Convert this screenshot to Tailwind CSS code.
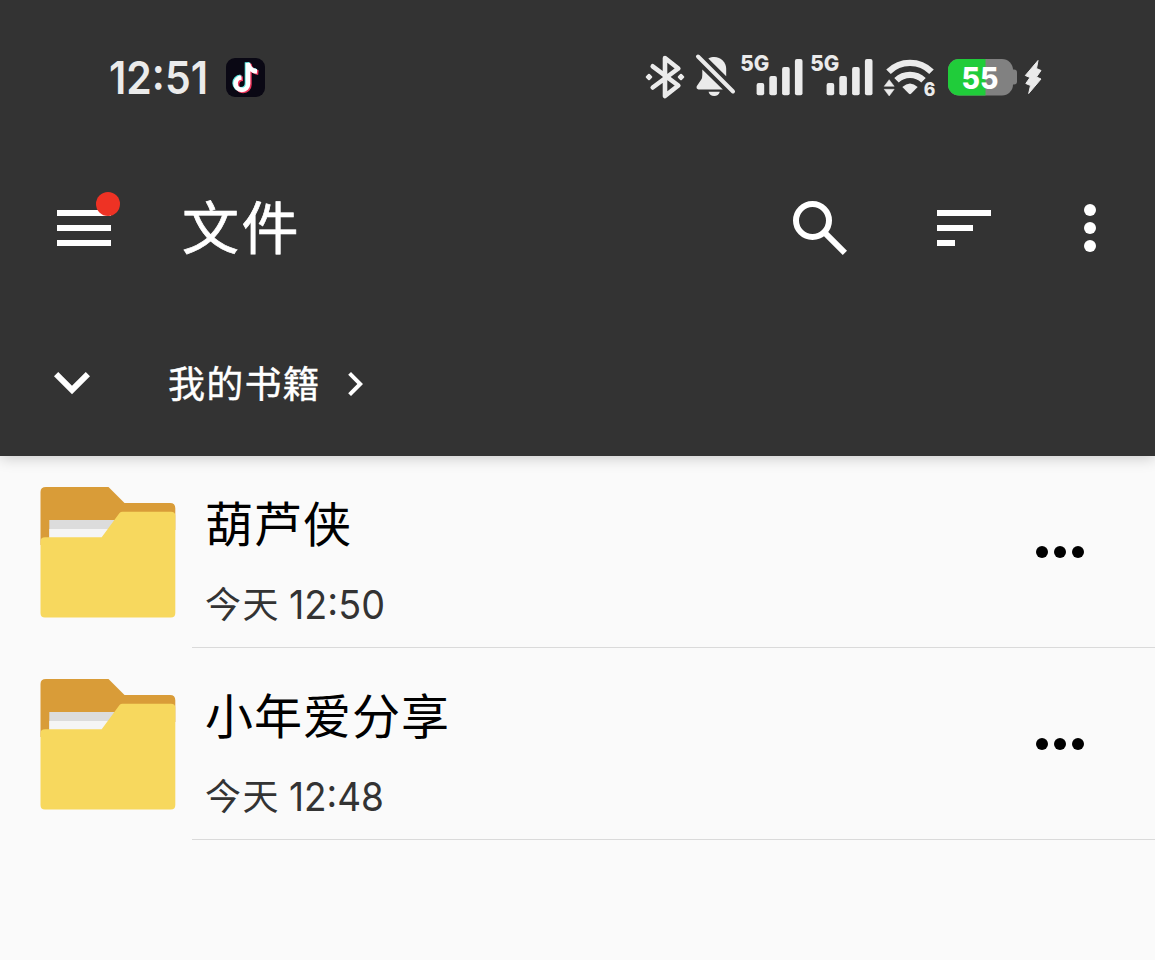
<!DOCTYPE html>
<html lang="zh-CN">

<head>
    <meta charset="UTF-8">
    <meta name="viewport" content="width=device-width, initial-scale=1.0">
    <title>文件</title>
    <script src="https://cdn.jsdelivr.net/npm/@tailwindcss/browser@4"></script>
</head>

<body class="h-[960px] overflow-hidden bg-[#fafafa] font-['Inter','Noto_Sans_CJK_SC',sans-serif]">
    <header class="relative h-[456px] bg-[#333333] text-white shadow-[0_2px_14px_rgba(0,0,0,0.2)]">
        <!-- Status bar -->
        <div class="flex h-36 items-start justify-between pt-[50px] pr-[109px] pl-[100px] text-[#ebebeb]">
            <div class="flex h-[54px] items-center">
                <svg width="116" height="54" viewBox="100 50 116 54" fill="currentColor">
                    <text x="109" y="94" font-size="45" font-weight="600" textLength="99" lengthAdjust="spacingAndGlyphs">12:51</text>
                </svg>
                <svg class="ml-2.5" width="39" height="54" viewBox="226 50 39 54">
                    <rect x="226" y="58" width="39" height="39" rx="9" fill="#0a0814" />
                    <g fill="none" stroke-width="4.6">
                        <path d="M241.500 77.500a6.200 6.200 0 1 0 6.500 6.200V63c.6 4.500 4 8 9 8.500" stroke="#5ce6e0" transform="translate(-1 -.7)" />
                        <path d="M241.500 77.500a6.200 6.200 0 1 0 6.500 6.200V63c.6 4.500 4 8 9 8.500" stroke="#f0365c" transform="translate(1.4 1.1)" />
                        <path d="M241.500 77.500a6.200 6.200 0 1 0 6.500 6.200V63c.6 4.500 4 8 9 8.500" stroke="#ffffff" />
                    </g>
                </svg>
            </div>
            <div class="flex h-[54px] items-center">
                <!-- bluetooth -->
                <svg width="48" height="54" viewBox="644 50 48 54" fill="none">
                    <path d="M652.7 66.300 678.300 85.500 665 96V58l13.300 10.500L652.700 87.500" stroke="currentColor" stroke-width="4.6" stroke-linecap="round" stroke-linejoin="round" />
                    <path d="m649 74.800 2.200 2.200-2.200 2.200-2.200-2.200zm32 0 2.200 2.200-2.200 2.200-2.200-2.200z" fill="currentColor" stroke="currentColor" stroke-width="2.2" stroke-linejoin="round" />
                </svg>
                <!-- muted bell -->
                <svg width="48" height="54" viewBox="692 50 48 54" fill="currentColor">
                    <path d="M708.300 58.500C717 54 726.200 60 726.200 69v7.300z" />
                    <path d="M702.300 69.500 722.800 89.500H698.500Q696 89 696.700 86.300L701.300 79.500Q702.300 78 702.300 75z" />
                    <path d="M708.500 91.700h11.300q-1.300 4.400-5.600 4.400t-5.700-4.400z" />
                    <path d="M698 56.500 733 91.500" stroke="currentColor" stroke-width="4" stroke-linecap="round" />
                </svg>
                <!-- signal 1 -->
                <svg width="70" height="54" viewBox="740 50 70 54" fill="currentColor">
                    <text x="740.3" y="71.300" font-size="22" font-weight="800" textLength="29" lengthAdjust="spacingAndGlyphs">5G</text>
                    <rect x="756.6" y="83" width="7.6" height="12.2" rx="2" />
                    <rect x="769.3" y="76" width="7.6" height="19.2" rx="2" />
                    <rect x="782.1" y="67" width="7.6" height="28.2" rx="2" />
                    <rect x="794.9" y="59" width="7.6" height="36.2" rx="2" />
                </svg>
                <!-- signal 2 -->
                <svg width="70" height="54" viewBox="740 50 70 54" fill="currentColor">
                    <text x="740.3" y="71.300" font-size="22" font-weight="800" textLength="29" lengthAdjust="spacingAndGlyphs">5G</text>
                    <rect x="756.6" y="83" width="7.6" height="12.2" rx="2" />
                    <rect x="769.3" y="76" width="7.6" height="19.2" rx="2" />
                    <rect x="782.1" y="67" width="7.6" height="28.2" rx="2" />
                    <rect x="794.9" y="59" width="7.6" height="36.2" rx="2" />
                </svg>
                <!-- wifi -->
                <svg width="62" height="54" viewBox="880 50 62 54" fill="currentColor">
                    <path d="M888.500 71.700a30.500 30.500 0 0 1 43 0M896.500 80.300a19.500 19.500 0 0 1 27 0" fill="none" stroke="currentColor" stroke-width="6.4" />
                    <path d="M902.300 87q7.700-7 15.400 0l-6.700 6.800q-1 .8-2 0z" />
                    <path d="M889.200 79.700 894.200 86.300H884.200zM884.200 89.300H894.200L889.200 96z" stroke="currentColor" stroke-width=".5" stroke-linejoin="round" />
                    <text x="923.800" y="96.300" font-size="18.500" font-weight="800" textLength="11.600" lengthAdjust="spacingAndGlyphs">6</text>
                </svg>
                <!-- battery -->
                <svg width="80" height="54" viewBox="942 50 80 54">
                    <path d="M1012 69.500h2q3 0 3 3v9q0 3-3 3h-2z" fill="#818181" />
                    <rect x="948" y="59" width="65" height="36.500" rx="11" fill="#818181" />
                    <path d="M985.500 59H959a11 11 0 0 0-11 11v14.500a11 11 0 0 0 11 11h26.500z" fill="#20cc3a" />
                    <text x="961.500" y="88.500" font-size="30" font-weight="800" fill="#ffffff" textLength="37" lengthAdjust="spacingAndGlyphs">55</text>
                </svg>
                <!-- charging bolt -->
                <svg width="24" height="54" viewBox="1022 50 24 54" fill="currentColor">
                    <path d="M1038 60.500 1025.300 75.500 1030 77.500 1025.800 83.500 1030.500 85.500 1028.700 93.500 1041 79 1036.500 77 1041 70.500 1036.500 68.500z" stroke="currentColor" stroke-width="1" stroke-linejoin="round" />
                </svg>
            </div>
        </div>

        <!-- Toolbar -->
        <div class="flex h-[168px] items-center pr-[29px] pl-12">
            <button class="relative">
                <svg class="size-[72px]" viewBox="0 0 24 24" fill="currentColor">
                    <path d="M3 18h18v-2H3v2zm0-5h18v-2H3v2zm0-7v2h18V6H3z" />
                </svg>
                <span class="absolute top-0 right-0 size-6 rounded-full bg-[#ee3224]"></span>
            </button>
            <h1 class="ml-[62px] flex-1 pt-0.5 text-[57px] leading-[72px] tracking-[2.5px] [-webkit-text-stroke:0.7px_white]">文件</h1>
            <div class="flex items-center">
                <svg class="size-[72px]" viewBox="0 0 24 24" fill="none" stroke="currentColor" stroke-width="2">
                    <circle cx="9.500" cy="9.500" r="5.500" />
                    <path d="M13.300 13.300 20.300 20.300" />
                </svg>
                <svg class="ml-[72px] size-[72px]" viewBox="0 0 24 24" fill="currentColor">
                    <path d="M3 18h6v-2H3v2zM3 6v2h18V6H3zm0 7h12v-2H3v2z" />
                </svg>
                <svg class="ml-[54px] size-[72px]" viewBox="0 0 24 24" fill="currentColor">
                    <circle cx="12" cy="6" r="2" />
                    <circle cx="12" cy="12" r="2" />
                    <circle cx="12" cy="18" r="2" />
                </svg>
            </div>
        </div>

        <!-- Breadcrumb -->
        <div class="flex h-36 items-center pl-9">
            <svg class="size-[72px]" viewBox="0 0 24 24" fill="currentColor">
                <path d="M7.410 8 12 12.580l4.590-4.580L18 9.410l-6 6-6-6z" />
            </svg>
            <span class="ml-[60px] pt-0.5 text-[37px] leading-[54px] tracking-[1.2px] [-webkit-text-stroke:0.4px_white]">我的书籍</span>
            <svg class="ml-2.5 size-12" viewBox="0 0 24 24" fill="currentColor">
                <path d="M8.590 16.590 13.170 12 8.590 7.410 10 6l6 6-6 6z" />
            </svg>
        </div>
    </header>

    <!-- File list -->
    <main>
        <div class="flex h-48 pl-10">
            <svg class="mt-[30px] shrink-0" width="136" height="132" viewBox="40 486 136 132">
                <path d="M46 487h62.500l16 16H170q5.300 0 5.300 5.300V530H120V545H40.500V492q0-5 5.500-5z" fill="#d99c38" />
                <path d="M49.300 520H120v20H49.300z" fill="#dcdcdc" />
                <path d="M49.300 529H112v10H49.300z" fill="#f5f5f5" />
                <path d="M45 537.300h56.700L119.500 513q1.200-1.300 3-1.300H171q4.300 0 4.300 4V613q0 4.500-4.500 4.500H45q-4.500 0-4.500-4.500v-71.500q0-4.200 4.500-4.200z" fill="#f7d85e" />
            </svg>
            <div class="ml-4 flex flex-1 border-b border-[#dadada]">
                <div class="flex-1 pt-[33px] pl-[13px]">
                    <div class="text-[48px] leading-[72px] tracking-[1px] text-black">葫芦侠</div>
                    <div class="mt-[17px] flex text-[36px] leading-[54px] text-[#333333]">
                        <span class="tracking-[1.5px]">今天</span>
                        <svg class="ml-2" width="110" height="54" viewBox="288 0 110 54" fill="currentColor">
                            <text x="289" y="41.300" font-size="40" textLength="96" lengthAdjust="spacingAndGlyphs">12:50</text>
                        </svg>
                    </div>
                </div>
                <svg class="mt-[60px] mr-[59px] size-[72px]" viewBox="0 0 24 24" fill="#000000">
                    <circle cx="6" cy="12" r="2" />
                    <circle cx="12" cy="12" r="2" />
                    <circle cx="18" cy="12" r="2" />
                </svg>
            </div>
        </div>

        <div class="flex h-48 pl-10">
            <svg class="mt-[30px] shrink-0" width="136" height="132" viewBox="40 486 136 132">
                <path d="M46 487h62.500l16 16H170q5.300 0 5.300 5.300V530H120V545H40.500V492q0-5 5.500-5z" fill="#d99c38" />
                <path d="M49.300 520H120v20H49.300z" fill="#dcdcdc" />
                <path d="M49.300 529H112v10H49.300z" fill="#f5f5f5" />
                <path d="M45 537.300h56.700L119.500 513q1.200-1.300 3-1.300H171q4.300 0 4.300 4V613q0 4.500-4.500 4.500H45q-4.500 0-4.500-4.500v-71.500q0-4.200 4.500-4.200z" fill="#f7d85e" />
            </svg>
            <div class="ml-4 flex flex-1 border-b border-[#dadada]">
                <div class="flex-1 pt-[33px] pl-[13px]">
                    <div class="text-[48px] leading-[72px] tracking-[1px] text-black">小年爱分享</div>
                    <div class="mt-[17px] flex text-[36px] leading-[54px] text-[#333333]">
                        <span class="tracking-[1.5px]">今天</span>
                        <svg class="ml-2" width="110" height="54" viewBox="288 0 110 54" fill="currentColor">
                            <text x="289" y="41.300" font-size="40" textLength="95" lengthAdjust="spacingAndGlyphs">12:48</text>
                        </svg>
                    </div>
                </div>
                <svg class="mt-[60px] mr-[59px] size-[72px]" viewBox="0 0 24 24" fill="#000000">
                    <circle cx="6" cy="12" r="2" />
                    <circle cx="12" cy="12" r="2" />
                    <circle cx="18" cy="12" r="2" />
                </svg>
            </div>
        </div>
    </main>
</body>

</html>
